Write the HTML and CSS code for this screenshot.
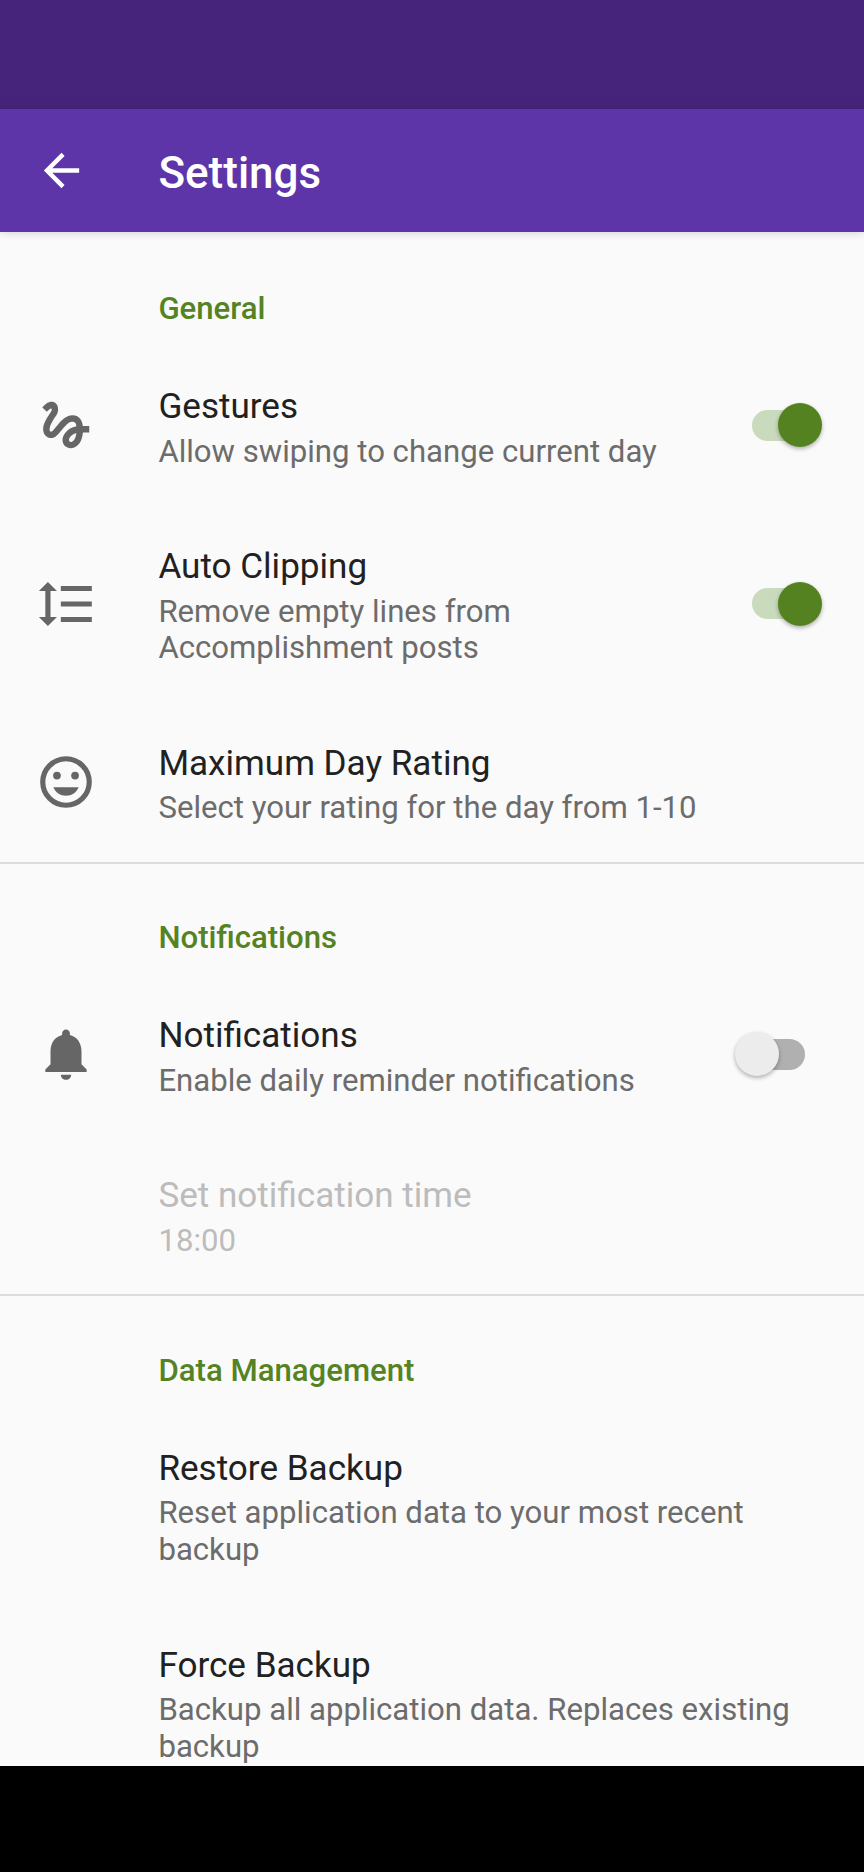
FILE: index.html
```
<!DOCTYPE html>
<html lang="en">
<head>
<meta charset="utf-8">
<title>Settings</title>
<link rel="stylesheet" href="styles.css">
</head>
<body>
<div class="status-bar"></div>
<header class="toolbar">
  <svg class="back" viewBox="0 0 24 24"><path d="M20 11H7.830l5.590-5.590L12 4l-8 8 8 8 1.410-1.410L7.830 13H20v-2z"/></svg>
  <h1 class="toolbar-title">Settings</h1>
</header>
<main class="content">
  <section class="category">
    <h2 class="category-title">General</h2>
    <div class="row">
      <svg class="icon" viewBox="0 0 24 24"><path d="M4.59 6.89c.7-.71 1.4-1.35 1.71-1.22.5.2 0 1.03-.3 1.52-.25.42-2.86 3.89-2.86 6.31 0 1.28.48 2.34 1.34 2.98.75.56 1.74.73 2.64.46 1.07-.31 1.95-1.4 3.06-2.77 1.21-1.49 2.83-3.44 4.08-3.44 1.63 0 1.65 1.01 1.76 1.79-3.78.64-5.38 3.67-5.38 5.37 0 1.7 1.44 3.09 3.21 3.09 1.63 0 4.29-1.33 4.69-6.1H21v-2.5h-2.47c-.15-1.65-1.09-4.2-4.03-4.2-2.25 0-4.18 1.91-4.94 2.84-.58.73-2.06 2.48-2.29 2.72-.25.3-.68.84-1.11.84-.45 0-.72-.83-.36-1.92.35-1.09 1.4-2.86 1.85-3.52.78-1.14 1.3-1.92 1.3-3.28C8.95 3.69 7.31 3 6.44 3 5.12 3 3.97 4 3.72 4.25c-.36.36-.66.66-.88.93l1.75 1.71zm9.29 11.66c-.31 0-.74-.26-.74-.72 0-.6.73-2.2 2.87-2.76-.3 2.69-1.43 3.48-2.13 3.48z"/></svg>
      <div class="text"><div class="title">Gestures</div><div class="summary">Allow swiping to change current day</div></div>
      <div class="switch on"><span class="thumb"></span></div>
    </div>
    <div class="row tall">
      <svg class="icon" viewBox="0 0 24 24"><path d="M6 7h2.500L5 3.500 1.500 7H4v10H1.500L5 20.500 8.500 17H6V7zm4-2v2h12V5H10zm0 14h12v-2H10v2zm0-6h12v-2H10v2z"/></svg>
      <div class="text"><div class="title">Auto Clipping</div><div class="summary">Remove empty lines from<br>Accomplishment posts</div></div>
      <div class="switch on"><span class="thumb"></span></div>
    </div>
    <div class="row">
      <svg class="icon" viewBox="0 0 24 24"><circle class="face" cx="12" cy="12" r="9"/><circle cx="8.500" cy="9.500" r="1.500"/><circle cx="15.500" cy="9.500" r="1.500"/><path d="M7.100 14h9.800c-.8 2-2.700 3.300-4.900 3.300S7.900 16 7.100 14z"/></svg>
      <div class="text"><div class="title">Maximum Day Rating</div><div class="summary">Select your rating for the day from 1-10</div></div>
    </div>
  </section>
  <section class="category divided">
    <h2 class="category-title">Notifications</h2>
    <div class="row">
      <svg class="icon" viewBox="0 0 24 24"><path d="M12 22c1.100 0 2-.9 2-2h-4c0 1.100.9 2 2 2z"/><path d="M18 16v-5c0-3.070-1.630-5.640-4.500-6.320V4c0-.83-.67-1.500-1.500-1.500s-1.500.67-1.500 1.500v.68C7.640 5.360 6 7.920 6 11v5l-2 2v1h16v-1l-2-2z"/></svg>
      <div class="text"><div class="title">Notifications</div><div class="summary">Enable daily reminder notifications</div></div>
      <div class="switch"><span class="thumb"></span></div>
    </div>
    <div class="row disabled">
      <div class="text"><div class="title">Set notification time</div><div class="summary">18:00</div></div>
    </div>
  </section>
  <section class="category divided">
    <h2 class="category-title">Data Management</h2>
    <div class="row tall">
      <div class="text"><div class="title">Restore Backup</div><div class="summary">Reset application data to your most recent<br>backup</div></div>
    </div>
    <div class="row tall">
      <div class="text"><div class="title">Force Backup</div><div class="summary">Backup all application data. Replaces existing<br>backup</div></div>
    </div>
  </section>
</main>
<footer class="nav-bar"></footer>
</body>
</html>
```
FILE: styles.css
```
* { box-sizing: border-box; }
body {
  margin: 0;
  height: 1872px;
  display: flex;
  flex-direction: column;
  overflow: hidden;
  background: #fafafa;
  font-family: Roboto, sans-serif;
}
.status-bar { flex: 0 0 109px; background: #47247b; }
.toolbar {
  flex: 0 0 123px;
  display: flex;
  align-items: center;
  padding-left: 35px;
  background: #5e35a8;
  color: #fff;
  box-shadow: 0 1px 8px rgba(0, 0, 0, 0.16);
}
.back { width: 53px; height: 53px; margin-right: 70.400px; fill: #fff; }
.toolbar-title { margin: 5px 0 0; font-size: 44px; line-height: 52px; font-weight: 500; }
.content { flex: 1 1 0; min-height: 0; overflow: hidden; margin-top: 10px; }
.category { display: flex; flex-direction: column; }
.category-title {
  height: 103.200px;
  margin: 0;
  padding: 47.500px 0 0 158.400px;
  font-size: 31.150px;
  line-height: 37px;
  font-weight: 500;
  color: #558323;
}
.divided { border-top: 2px solid #dcdcdc; }
.divided .category-title { height: 110.500px; padding-top: 55.500px; }
.row { height: 160px; display: flex; align-items: center; padding-right: 37px; }
.tall { height: 196.800px; }
.icon { flex: none; width: 62px; height: 62px; margin-left: 35px; fill: #666; }
.face { fill: none; stroke: #666; stroke-width: 2; }
.text { margin-left: 158.400px; padding-top: 5px; flex: 1; }
.icon + .text { margin-left: 61.400px; }
.title { font-size: 35.100px; line-height: 42px; color: #212121; }
.summary { margin-top: 6.500px; font-size: 31.150px; line-height: 36.800px; color: #6c6c6c; white-space: nowrap; }
.disabled .title, .disabled .summary { color: #bcbcbc; }
.switch {
  flex: none;
  display: flex;
  align-items: center;
  width: 53px;
  height: 31px;
  margin-right: 22px;
  border-radius: 16px;
  background: #b0b0b0;
}
.thumb {
  flex: none;
  width: 44px;
  height: 44px;
  margin-left: -17.500px;
  border-radius: 50%;
  background: #ececec;
  box-shadow: 0 2px 4px rgba(0, 0, 0, 0.3);
}
.on { background: #c9dabd; }
.on .thumb { margin-left: 26px; background: #558220; }
.nav-bar { flex: 0 0 106px; background: #000; }
```
